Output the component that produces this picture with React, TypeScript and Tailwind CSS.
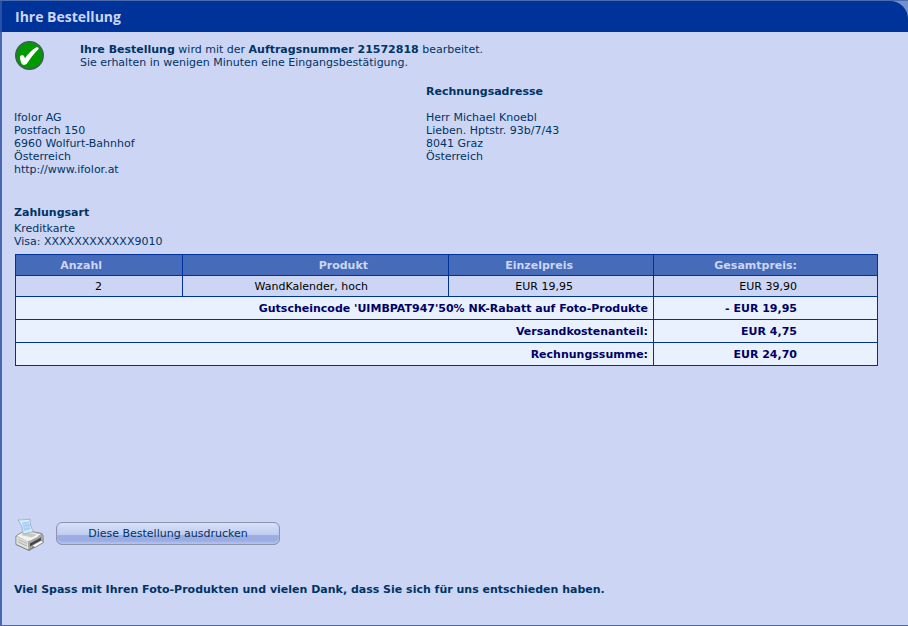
import React from 'react'

const sender = ['Ifolor AG', 'Postfach 150', '6960 Wolfurt-Bahnhof', 'Österreich', 'http://www.ifolor.at']
const recipient = ['Herr Michael Knoebl', 'Lieben. Hptstr. 93b/7/43', '8041 Graz', 'Österreich']

const totals = [
  { label: "Gutscheincode 'UIMBPAT947'50% NK-Rabatt auf Foto-Produkte", value: '- EUR 19,95' },
  { label: 'Versandkostenanteil:', value: 'EUR 4,75' },
  { label: 'Rechnungssumme:', value: 'EUR 24,70' },
]

function CheckIcon() {
  return (
    <svg viewBox="0 0 30 30" className="size-[30px] shrink-0" aria-hidden="true">
      <circle cx="14.5" cy="14.5" r="13.8" fill="#009900" stroke="#4c5260" strokeWidth="1.3" />
      <path
        d="M5 15.500c.8-1.500 3.500-1.800 4.300.2l.7 1.600c3-4.500 7-8.700 11.500-11 1.600-.6 2.700.7 1.700 2.200-4.200 4.300-8.200 9.300-11.200 14-1.200 1.600-4.200 2-5.300.3C5.700 20.500 4.800 17.800 5 15.500z"
        fill="#fff"
      />
    </svg>
  )
}

function PrinterIcon() {
  return (
    <svg viewBox="0 0 30 34" className="h-[34px] w-[30px] shrink-0" aria-hidden="true">
      <path d="M2 22l12 6 14-9v6l-14 8-12-6z" fill="#4d504f" opacity=".65" />
      <path d="M1 18l9-5.500 17 3 1 2v6L13.500 32 1 26.500z" fill="#c9cbc7" stroke="#777a79" strokeWidth="1" />
      <path d="M1 18l9-5.500 17 3.500-14 8z" fill="#f2f3ef" stroke="#92958f" strokeWidth=".7" />
      <path d="M13 24l14.500-8v7L13.500 31.500z" fill="#a3a6a3" />
      <path d="M1.500 18.500L13 24v7.500L1.500 26z" fill="#e1e2dd" />
      <path d="M3 21.500l9 4M3 24l9 4" stroke="#aeb0ac" strokeWidth="1" />
      <path d="M6 17l5-2.500 11 2-5 3z" fill="#c6c8c5" />
      <path d="M3 2c4.500-.2 8-.2 12-1 0 5 .8 9 3.500 12.500L8 16C8 10 6 6 3 2z" fill="#ddefff" stroke="#8aa0b5" strokeWidth=".7" />
      <path d="M7 5.500l7-1.500 1.500 8L9 13.500z" fill="#b2d9fa" />
      <path d="M7 5l7-1M8 8l7-1M9 11l6-1" stroke="#9bcdf8" strokeWidth="1" />
      <path d="M15 25.500l11-6v3l-11 6z" fill="#434645" />
      <path d="M17 27.500l9-5 3 1.500-9 5.500z" fill="#fafaf8" stroke="#747774" strokeWidth=".7" />
      <path d="M15 22l8-4" stroke="#fff" strokeWidth="1" />
    </svg>
  )
}

export default function App() {
  return (
    <div className="min-h-screen flex flex-col bg-[#7590c9] border-t border-t-[#4a6bb0] font-['Verdana','DejaVu_Sans',sans-serif] text-[11px] leading-[13px] text-[#003366]">
      <header className="h-[31px] flex items-center border-l-2 border-l-[#2850a5] rounded-tr-[18px] bg-[#003399] pl-[13px]">
        <h1 className="font-['Open_Sans',sans-serif] text-[14px] leading-5 font-bold text-[#ccd6f4]">Ihre Bestellung</h1>
      </header>

      <main className="grow bg-[#ccd6f4] border-l-2 border-b border-[#4868b0] pl-3 pr-[30px] pt-[9px]">
        <div className="flex gap-[35px] pl-px">
          <CheckIcon />
          <p className="pt-0.5">
            <b>Ihre Bestellung</b> wird mit der <b>Auftragsnummer 21572818</b> bearbeitet.
            <br />
            Sie erhalten in wenigen Minuten eine Eingangsbestätigung.
          </p>
        </div>

        <div className="flex pt-3.5">
          <address className="w-[412px] pt-[26px] not-italic">
            {sender.map(line => <div key={line}>{line}</div>)}
          </address>
          <div>
            <h2 className="font-bold pb-[13px]">Rechnungsadresse</h2>
            <address className="not-italic">
              {recipient.map(line => <div key={line}>{line}</div>)}
            </address>
          </div>
        </div>

        <section className="pt-[30px]">
          <h2 className="font-bold pb-[3px]">Zahlungsart</h2>
          <p>Kreditkarte</p>
          <p>Visa: XXXXXXXXXXXX9010</p>
        </section>

        <div className="pt-1.5 pl-px">
          <table className="w-full table-fixed border-collapse text-right text-black [&_td]:border [&_td]:border-[#003399] [&_th]:border [&_th]:border-[#003399] [&_td]:pt-px [&_th]:pt-px">
            <colgroup>
              <col className="w-[167px]" />
              <col className="w-[266px]" />
              <col className="w-[205px]" />
              <col />
            </colgroup>
            <thead>
              <tr className="h-[21px] bg-[#466bb8] text-[#ccd6f4]">
                <th className="pr-20">Anzahl</th>
                <th className="pr-20">Produkt</th>
                <th className="pr-20">Einzelpreis</th>
                <th className="pr-20">Gesamtpreis:</th>
              </tr>
            </thead>
            <tbody>
              <tr className="h-[21px]">
                <td className="pr-20">2</td>
                <td className="pr-20">WandKalender, hoch</td>
                <td className="pr-20">EUR 19,95</td>
                <td className="pr-20">EUR 39,90</td>
              </tr>
              {totals.map(row => (
                <tr key={row.label} className="h-[23px] bg-[#e9f1ff] font-bold text-[#000066]">
                  <td colSpan={3} className="pr-[5px]">{row.label}</td>
                  <td className="pr-20">{row.value}</td>
                </tr>
              ))}
            </tbody>
          </table>
        </div>

        <div className="flex items-start gap-[11px] pt-[152px] pl-px">
          <PrinterIcon />
          <button
            type="button"
            className="mt-1 w-56 h-[23px] rounded-md border border-[#8c93ab] bg-linear-to-b from-[#d8e1fa] from-0% via-[#c0ccf1] via-55% to-[#9bace2] to-60% text-center shadow-[inset_0_-2px_2px_#b2c2ef]"
          >
            Diese Bestellung ausdrucken
          </button>
        </div>

        <p className="pt-[31px] pb-6 font-bold">
          Viel Spass mit Ihren Foto-Produkten und vielen Dank, dass Sie sich für uns entschieden haben.
        </p>
      </main>
    </div>
  )
}
